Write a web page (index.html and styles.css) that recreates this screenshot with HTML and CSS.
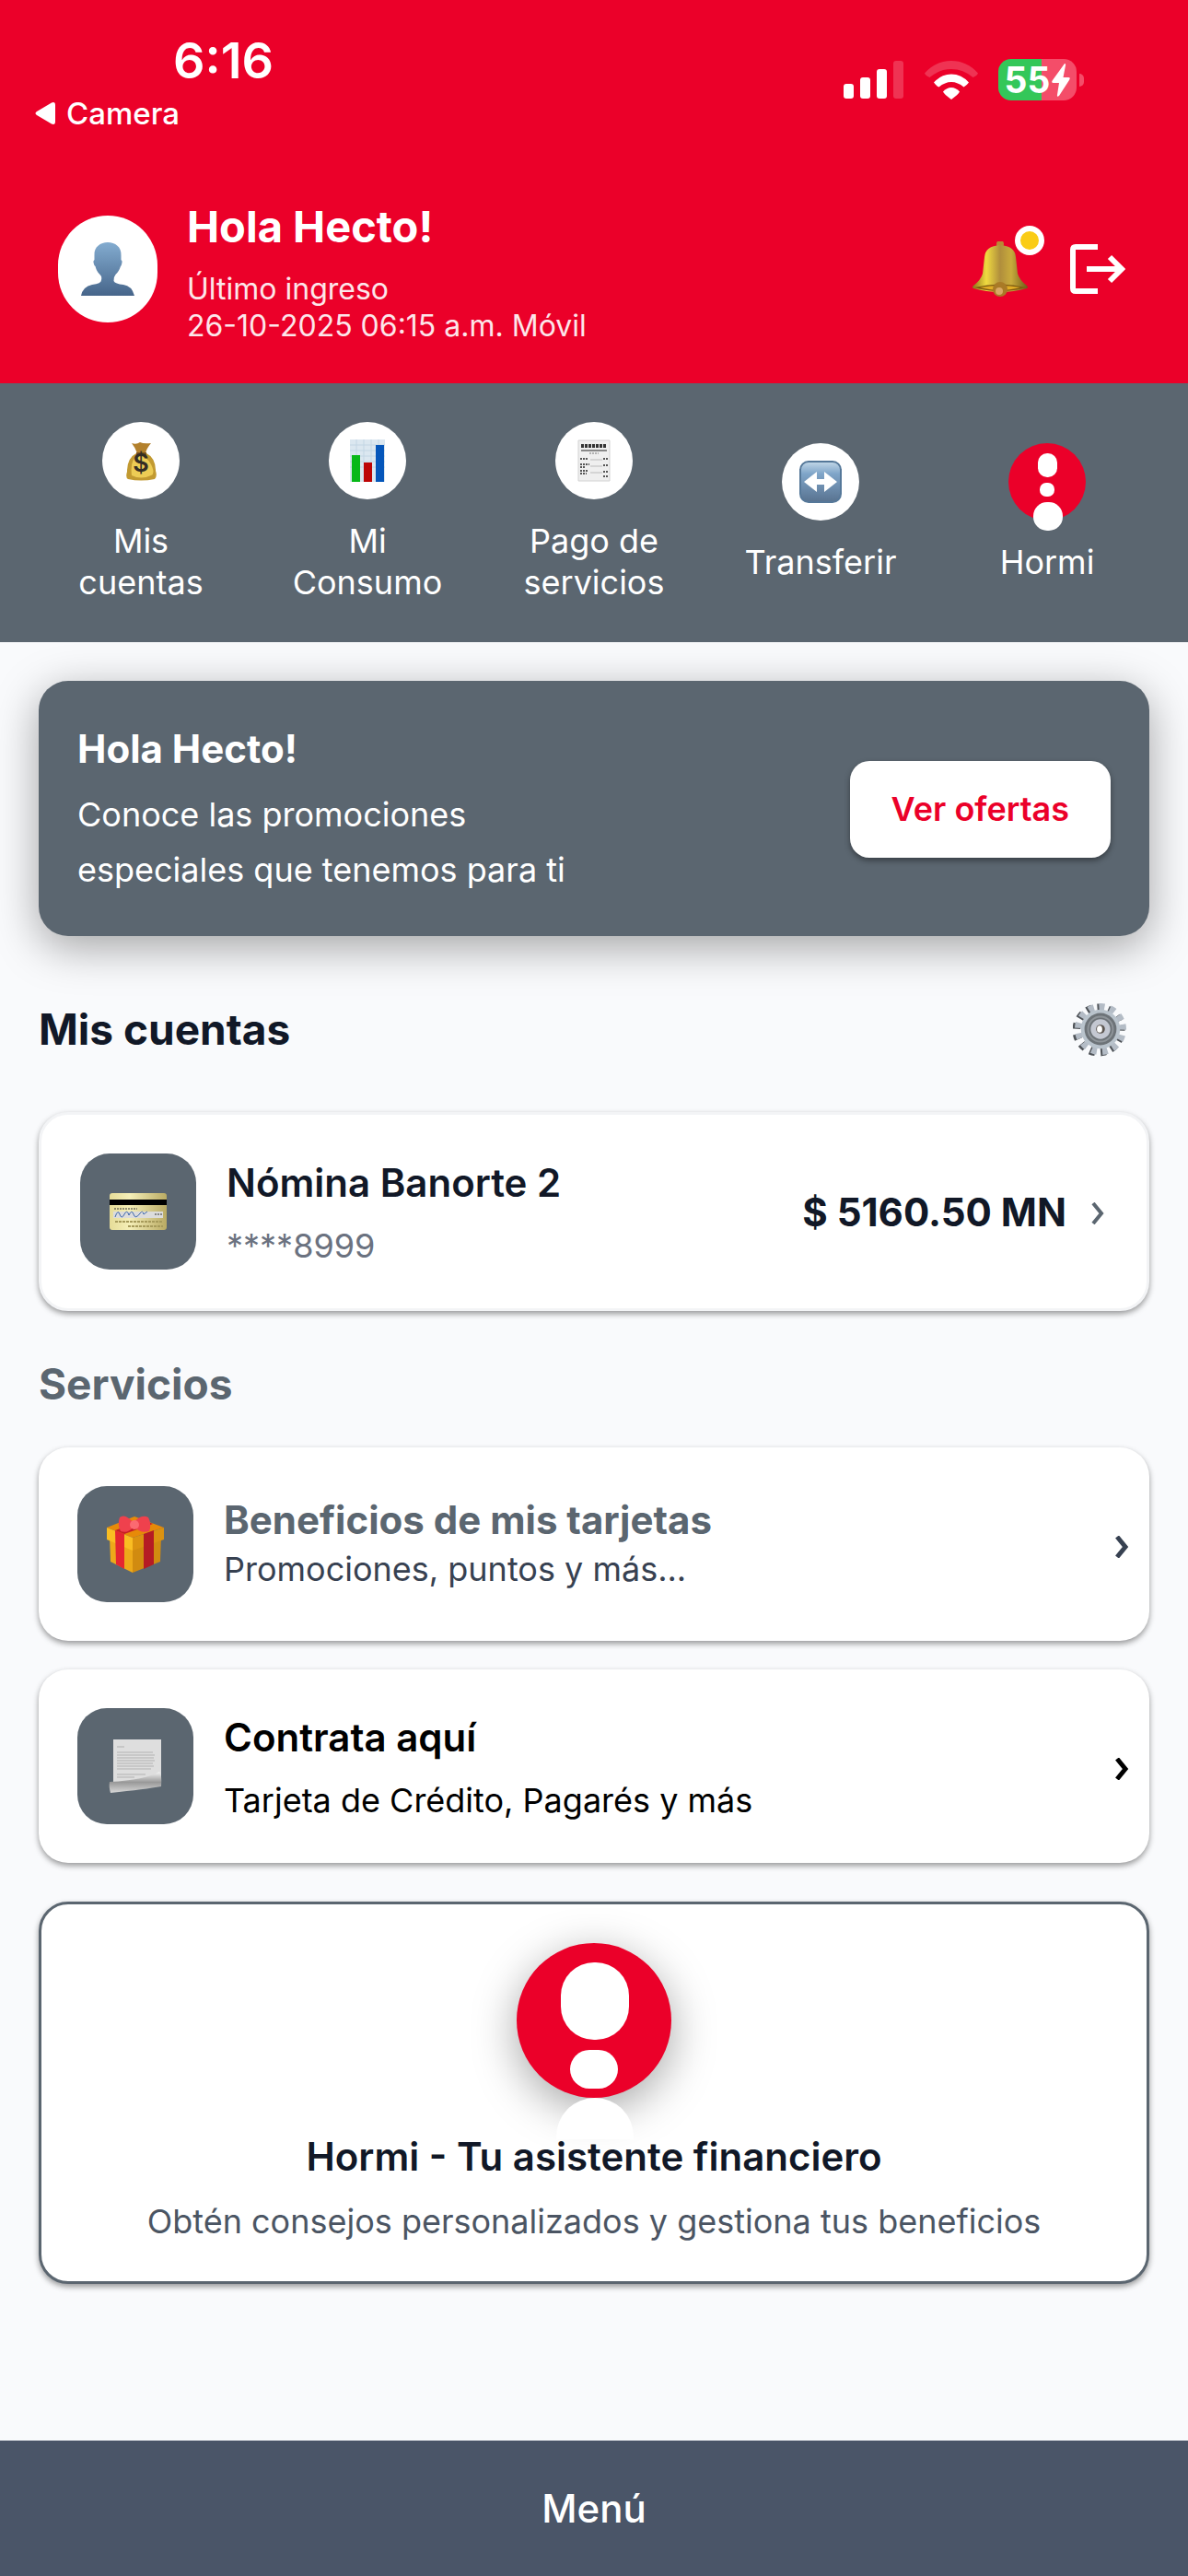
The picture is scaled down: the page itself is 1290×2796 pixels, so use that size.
FILE: index.html
```html
<!DOCTYPE html>
<html lang="es">
<head>
  <meta charset="utf-8">
  <meta name="viewport" content="width=device-width, initial-scale=1">
  <title>Mis cuentas</title>
  <link rel="stylesheet" href="styles.css">
</head>
<body>

<header class="top">
  <div class="status">
    <div class="status-left">
      <div class="clock">6:16</div>
      <a class="back" href="#">
        <svg width="22" height="26" viewBox="0 0 22 26"><path d="M2 11 18 1.5Q22 0 22 4V22Q22 26 18 24.5L2 15Q-1 13 2 11Z" fill="#fff"/></svg>
        Camera
      </a>
    </div>
    <div class="status-icons">
      <svg width="66" height="42" viewBox="0 0 66 42" fill="#fff">
        <rect x="0" y="25" width="11" height="16" rx="3"/>
        <rect x="18" y="18" width="11" height="23" rx="3"/>
        <rect x="36" y="9" width="11" height="32" rx="3"/>
        <rect x="54" y="0" width="11" height="41" rx="3" opacity=".2"/>
      </svg>
      <svg width="58" height="42" viewBox="0 0 58 42" fill="#fff">
        <path d="M0 13.5Q12 0 29 0T58 13.5Q57 16 52.5 18Q42 9 29 9T5.500 18Q1 16 0 13.5Z" opacity=".2"/>
        <path d="M10 23.5Q18 14.5 29 14.5T48 23.5Q46 26.5 42.5 28.5Q36 23 29 23T15.500 28.5Q12 26.5 10 23.5Z"/>
        <path d="M20 33.5Q24 29 29 29T38 33.5Q37 36 29 42Q21 36 20 33.5Z"/>
      </svg>
      <div class="battery">
        <span class="battery-text">55</span>
        <svg width="20" height="36" viewBox="0 0 20 36"><path d="M14 0Q15.500 0 15 2L12.500 15H18Q21 15 19 18L8 35Q5.500 37 6 34L8 21H2Q-1 21 1 18Z" fill="#fff"/></svg>
      </div>
    </div>
  </div>

  <div class="profile">
    <div class="avatar">
      <svg width="58" height="58" viewBox="0 0 58 58">
        <defs><linearGradient id="person" x2="0" y2="1"><stop offset="0" stop-color="#83acd0"/><stop offset="1" stop-color="#46658a"/></linearGradient></defs>
        <path d="M29 0C37 0 44 5 43.5 14V19Q45 20 44.5 22Q44 25 43 26Q41 32 37.5 35Q35 38 35.5 42Q37 45 46 46Q55 47 58 58H0Q2 48 12 46Q22 45 22 41Q23 37 20.5 35Q17 32 15.5 26Q14 25 13.5 22Q13 20 14.5 19V14C14 5 21 0 29 0Z" fill="url(#person)"/>
      </svg>
    </div>
    <div class="greeting">
      <h1>Hola Hecto!</h1>
      <p>Último ingreso<br>26-10-2025 06:15 a.m. Móvil</p>
    </div>
    <button class="icon-button bell" aria-label="Notificaciones">
      <svg width="60" height="60" viewBox="0 0 60 60">
        <defs><linearGradient id="brass"><stop offset="0" stop-color="#8d7418"/><stop offset=".25" stop-color="#f0db40"/><stop offset=".5" stop-color="#b08e3c"/><stop offset=".7" stop-color="#c9ab3c"/><stop offset="1" stop-color="#6d5a18"/></linearGradient></defs>
        <circle cx="30" cy="3" r="4" fill="#b98a35"/>
        <path d="M30 4Q46 5 47 17L49 35Q51 42 59 48Q61 50 59 51Q45 55 30 55T1 51Q-1 50 1 48Q9 42 11 35L13 17Q14 5 30 4Z" fill="url(#brass)"/>
        <path d="M2 50Q30 43 58 50Q45 54 30 54T2 50Z" fill="#7d5a10"/>
        <path d="M8 50Q30 46 52 50Q40 53 30 53T8 50Z" fill="#e0ac25"/>
        <circle cx="30" cy="52" r="8" fill="#a97a26"/>
        <circle cx="29" cy="54" r="4" fill="#d8a866"/>
      </svg>
      <span class="badge"></span>
    </button>
    <button class="icon-button" aria-label="Salir">
      <svg width="60" height="54" viewBox="0 0 60 54" fill="none" stroke="#fff" stroke-width="6">
        <path d="M30 3H6Q3 3 3 6V48Q3 51 6 51H30"/>
        <path d="M18 27H56"/>
        <path d="M43 14 56 27 43 40"/>
      </svg>
    </button>
  </div>
</header>

<nav class="shortcuts">
  <a href="#">
    <span class="circle">
      <svg width="33" height="43" viewBox="0 0 33 43">
        <path d="M6 2Q11 4 15 1Q19 3 27 2Q22 8 21 13H12Q10 7 6 2Z" fill="#b3812d"/>
        <path d="M11 13H22Q32 18 32 32Q34 38 31 41Q16 44 2 41Q-1 39 1 33Q1 18 11 13Z" fill="#c29a31"/>
        <path d="M12 16Q22 15 27 25T27 37Q16 42 6 37Q4 20 12 16Z" fill="#edcc55"/>
        <path d="M11 12H22V15H11Z" fill="#7f551d"/>
      </svg>
      <span class="coin">$</span>
    </span>
    Mis<br>cuentas
  </a>
  <a href="#">
    <span class="circle">
      <svg width="40" height="46" viewBox="0 0 40 46">
        <path d="M1 0H39V46H1Z" fill="#dbe7f0"/>
        <path d="M1 6H39M1 12H39M1 18H39M1 24H39M1 30H39M8 0V46M16 0V46M24 0V46M32 0V46" stroke="#c3d6e4" stroke-width="1"/>
        <path d="M3 17H12V46H3Z" fill="#07b818"/><path d="M16 25H25V46H16Z" fill="#bd0505"/><path d="M29 6H38V46H29Z" fill="#0556ba"/>
      </svg>
    </span>
    Mi<br>Consumo
  </a>
  <a href="#">
    <span class="circle">
      <svg width="36" height="46" viewBox="0 0 36 46">
        <path d="M1 1H35V45H1Z" fill="#efefef" stroke="#d2d2d2"/>
        <path d="M4 7H32" stroke="#333" stroke-width="4" stroke-dasharray="3 1"/>
        <path d="M4 12H32" stroke="#888" stroke-width="2"/>
        <path d="M13 15H23" stroke="#777" stroke-dasharray="2 1"/>
        <path d="M3 21H12M3 27H13M3 30H9M3 34H12M3 37H10M28 21H34M28 28H34M28 35H34M28 40H34" stroke="#555" stroke-width="2" stroke-dasharray="2 1"/>
        <path d="M14 22H27M14 29H27M14 36H27" stroke="#bbb"/>
      </svg>
    </span>
    Pago de<br>servicios
  </a>
  <a href="#">
    <span class="circle">
      <svg width="46" height="46" viewBox="0 0 46 46">
        <defs><linearGradient id="key" x2="0" y2="1"><stop offset="0" stop-color="#c3d8e8"/><stop offset=".3" stop-color="#7fa5c9"/><stop offset="1" stop-color="#58728f"/></linearGradient></defs>
        <rect x="1" y="1" width="44" height="44" rx="9" fill="url(#key)" stroke="#557899" stroke-width="2"/>
        <path d="M5 23 19 12V20H27V12L41 23 27 34V26H19V34Z" fill="#fff"/>
      </svg>
    </span>
    Transferir
  </a>
  <a href="#">
    <span class="circle hormi">
      <svg width="84" height="96" viewBox="0 0 84 96" fill="#fff">
        <rect x="32" y="11" width="21" height="26" rx="10"/>
        <rect x="34" y="43" width="16" height="15" rx="7"/>
        <rect x="27" y="64" width="32" height="31" rx="15"/>
      </svg>
    </span>
    Hormi
  </a>
</nav>

<main>
  <section class="promo">
    <div>
      <h2>Hola Hecto!</h2>
      <p>Conoce las promociones<br>especiales que tenemos para ti</p>
    </div>
    <button>Ver ofertas</button>
  </section>

  <div class="section-head">
    <h2>Mis cuentas</h2>
    <button class="icon-button" aria-label="Configurar cuentas">
      <svg width="58" height="60" viewBox="0 0 60 60">
        <circle cx="29" cy="31" r="25" fill="none" stroke="#4f5358" stroke-width="9" stroke-dasharray="6 6.083" transform="rotate(-12 29 31)"/>
        <circle cx="31" cy="30" r="25" fill="none" stroke="#b4bcc6" stroke-width="8" stroke-dasharray="6 6.083" transform="rotate(-12 31 30)"/>
        <circle cx="31" cy="30" r="22" fill="#b9c3cc"/>
        <circle cx="31" cy="30" r="18" fill="#6d7378"/>
        <circle cx="31" cy="30" r="14" fill="none" stroke="#8e9499" stroke-width="2"/>
        <circle cx="31" cy="30" r="11" fill="#c4c8d2"/>
        <circle cx="31" cy="30" r="5" fill="#5c5550"/>
        <ellipse cx="30" cy="30" rx="3" ry="4" fill="#fff"/>
      </svg>
    </button>
  </div>

  <a class="card account" href="#">
    <span class="tile">
      <svg width="62" height="50" viewBox="0 0 62 50">
        <defs><linearGradient id="gold"><stop offset="0" stop-color="#e6dc98"/><stop offset=".35" stop-color="#f5efb8"/><stop offset="1" stop-color="#b9aa63"/></linearGradient></defs>
        <rect y="5" width="62" height="40" rx="3" fill="url(#gold)"/>
        <path d="M0 12H62V18H0Z"/>
        <path d="M4 25H58V32H4Z" fill="#dcdcdc"/>
        <path d="M6 31Q9 22 11 28T16 28T21 29Q24 22 26 28T33 27Q36 23 37 28L41 25" fill="none" stroke="#3e69ad"/>
        <path d="M5 22H30M49 28H57" stroke="#333" stroke-width="1" stroke-dasharray="2 1"/>
        <path d="M6 36H58M20 41H58" stroke="#a79b5b" stroke-width="2" stroke-dasharray="3 1"/>
      </svg>
    </span>
    <span class="card-text">
      <strong>Nómina Banorte 2</strong>
      <span class="number">****8999</span>
    </span>
    <span class="amount">$ 5160.50 MN</span>
    <svg class="chevron" width="15" height="24" viewBox="0 0 15 24"><path d="M2 1 11 12 2 23"/></svg>
  </a>

  <h2 class="services-title">Servicios</h2>

  <a class="card service benefits" href="#">
    <span class="tile">
      <svg width="62" height="62" viewBox="0 0 62 62">
        <path d="M3 22 28 30V62L4 50Z" fill="#eda91a"/><path d="M59 22 28 30V62L58 50Z" fill="#d18b10"/>
        <path d="M0 13 30 1 62 13 28 24Z" fill="#e78a08"/>
        <path d="M0 13 28 24V38L0 26Z" fill="#fabd22"/><path d="M62 13 28 24V38L62 26Z" fill="#db9210"/>
        <path d="M9 16 19 20V58L10 53Z" fill="#e52630"/><path d="M40 20 51 16V53L40 58Z" fill="#b51b24"/>
        <path d="M9 16 40 5 50 9 19 20Z" fill="#c51d25"/>
        <path d="M29 8Q20-3 14 2Q11 10 15 17Q23 20 29 12Q37 20 46 17Q49 9 45 2Q37-2 29 8Z" fill="#ef414d"/>
        <circle cx="30" cy="10" r="5" fill="#fb6971"/>
      </svg>
    </span>
    <span class="card-text">
      <strong>Beneficios de mis tarjetas</strong>
      <span>Promociones, puntos y más...</span>
    </span>
    <svg class="chevron" width="15" height="24" viewBox="0 0 15 24"><path d="M2 1 11 12 2 23"/></svg>
  </a>

  <a class="card service" href="#">
    <span class="tile">
      <svg width="58" height="60" viewBox="0 0 58 60">
        <defs><linearGradient id="curl" x2="0" y2="1"><stop offset="0" stop-color="#f5f5f5"/><stop offset=".5" stop-color="#999"/><stop offset="1" stop-color="#d8d8d8"/></linearGradient></defs>
        <path d="M5 1H57V50L5 52Z" fill="#dedede"/>
        <path d="M9 9H17M9 15H48M9 18H50M9 21H49M9 24H50M9 27H48M9 30H49M9 33H46M9 39H40M9 42H28" stroke="#b1b1b1" stroke-width="1"/>
        <path d="M1 47Q40 45 55 36Q58 38 57 52Q40 55 2 59Q0 52 1 47Z" fill="url(#curl)"/>
      </svg>
    </span>
    <span class="card-text">
      <strong>Contrata aquí</strong>
      <span>Tarjeta de Crédito, Pagarés y más</span>
    </span>
    <svg class="chevron" width="15" height="24" viewBox="0 0 15 24"><path d="M2 1 11 12 2 23"/></svg>
  </a>

  <a class="card assistant" href="#">
    <span class="assistant-logo">
      <svg width="168" height="213" viewBox="0 0 168 213" fill="#fff">
        <rect x="48" y="21" width="74" height="84" rx="36"/>
        <rect x="58" y="116" width="52" height="42" rx="21"/>
        <path d="M43 213V210A42 42 0 0 1 127 210V213Z"/>
      </svg>
    </span>
    <strong>Hormi - Tu asistente financiero</strong>
    <span>Obtén consejos personalizados y gestiona tus beneficios</span>
  </a>
</main>

<button class="menu">Menú</button>

</body>
</html>
```

FILE: styles.css
```css
* {
  box-sizing: border-box;
}

body {
  margin: 0;
  min-height: 100vh;
  display: flex;
  flex-direction: column;
  background: #f9fafc;
  color: #111827;
  font-family: Inter, sans-serif;
  font-size: 36px;
  line-height: 45px;
}

h1, h2, p {
  margin: 0;
}

a {
  color: inherit;
  text-decoration: none;
}

button {
  border: 0;
  font: inherit;
  cursor: pointer;
}

svg {
  display: block;
}

.icon-button {
  padding: 0;
  background: none;
}

/* header */

.top {
  background: #eb0029;
  color: white;
}

.status {
  display: flex;
  align-items: flex-start;
  justify-content: space-between;
  height: 177px;
  padding: 36px 112px 0 38px;
}

.clock {
  padding-left: 150px;
  font-size: 54px;
  font-weight: 600;
  line-height: 60px;
}

.back {
  display: flex;
  align-items: center;
  gap: 12px;
  font-size: 33px;
  font-weight: 500;
  line-height: 54px;
}

.status-icons {
  display: flex;
  align-items: center;
  gap: 22px;
  padding-top: 28px;
}

.battery {
  position: relative;
  display: flex;
  align-items: center;
  justify-content: center;
  gap: 2px;
  width: 85px;
  height: 45px;
  margin-right: 9px;
  border-radius: 14px;
  background: linear-gradient(90deg, #34c759 55%, #f44d69 55%);
}

.battery::after {
  content: "";
  position: absolute;
  left: 88px;
  width: 5px;
  height: 14px;
  border-radius: 0 5px 5px 0;
  background: #f44d69;
}

.battery-text {
  font-size: 39px;
  font-weight: 700;
}

.profile {
  display: flex;
  align-items: center;
  height: 239px;
  padding: 0 68px 9px 63px;
}

.avatar {
  display: flex;
  align-items: center;
  justify-content: center;
  width: 108px;
  height: 116px;
  border-radius: 54px;
  background: white;
}

.greeting {
  flex: 1;
  padding: 6px 0 0 32px;
}

.greeting h1 {
  margin-bottom: 18px;
  font-size: 47px;
  line-height: 60px;
}

.greeting p {
  font-size: 32px;
  line-height: 40px;
  opacity: .9;
}

.bell {
  position: relative;
  margin-right: 46px;
}

.badge {
  position: absolute;
  top: -17px;
  right: -18px;
  width: 32px;
  height: 32px;
  border: 6px solid white;
  border-radius: 50%;
  background: #facc15;
}

/* shortcuts */

.shortcuts {
  display: grid;
  grid-template-columns: repeat(5, 1fr);
  align-items: center;
  padding: 42px 30px;
  background: #5b6670;
  color: white;
  text-align: center;
}

.circle {
  position: relative;
  display: flex;
  align-items: center;
  justify-content: center;
  width: 84px;
  height: 84px;
  margin: 0 auto 23px;
  border-radius: 50%;
  background: white;
}

.coin {
  position: absolute;
  top: 22px;
  color: #332d25;
  font-size: 27px;
  font-weight: 600;
}

.hormi {
  align-items: flex-start;
  background: #eb0029;
}

/* content */

main {
  flex: 1;
  padding: 42px;
}

.promo {
  display: flex;
  align-items: center;
  justify-content: space-between;
  padding: 44px 42px 42px;
  border-radius: 32px;
  background: #5b6670;
  color: white;
  box-shadow: 0 12px 48px rgba(0, 0, 0, .35);
}

.promo h2 {
  margin-bottom: 11px;
  font-size: 42px;
  line-height: 60px;
}

.promo p {
  line-height: 60px;
}

.promo button {
  padding: 30px 45px;
  border-radius: 21px;
  background: white;
  color: #eb0029;
  font-weight: 600;
  box-shadow: 0 3px 6px rgba(0, 0, 0, .4);
}

.section-head {
  display: flex;
  align-items: center;
  justify-content: space-between;
  margin: 71px 0 60px;
  padding-right: 25px;
}

.section-head h2,
.services-title {
  font-size: 46px;
  line-height: 60px;
}

.services-title {
  margin: 49px 0 39px;
  color: #5b6670;
}

.card {
  display: flex;
  align-items: center;
  border-radius: 32px;
  background: white;
  box-shadow: 0 3px 6px rgba(0, 0, 0, .4);
}

.card strong {
  font-size: 42px;
  font-weight: 600;
}

.tile {
  display: flex;
  align-items: center;
  justify-content: center;
  width: 126px;
  height: 126px;
  border-radius: 32px;
  background: #5b6670;
}

.card-text {
  display: flex;
  flex: 1;
  flex-direction: column;
  gap: 24px;
  padding: 6px 0 0 33px;
}

.chevron {
  fill: none;
  stroke: currentColor;
  stroke-width: 4;
}

.account {
  padding: 42px;
  border: 3px solid #f3f4f6;
}

.account .chevron {
  margin: 4px 3px 0 27px;
  color: #5b6670;
}

.number {
  color: #6b7280;
}

.amount {
  font-size: 42px;
  font-weight: 700;
}

.service {
  margin-bottom: 31px;
  padding: 42px 22px 42px 42px;
  color: black;
}

.service .chevron {
  margin-top: 6px;
  stroke-width: 5;
}

.benefits {
  color: #374151;
}

.benefits .card-text {
  gap: 9px;
  padding-top: 0;
}

.benefits strong {
  color: #5b6670;
  font-weight: 700;
}

.assistant {
  flex-direction: column;
  margin-top: 42px;
  padding: 42px;
  border: 3px solid #5b6670;
  color: #4b5563;
}

.assistant-logo {
  height: 168px;
  margin-bottom: 41px;
  border-radius: 50%;
  background: #eb0029;
  box-shadow: 0 12px 48px rgba(0, 0, 0, .35);
}

.assistant strong {
  position: relative;
  margin-bottom: 26px;
  color: #111827;
}

.menu {
  height: 147px;
  background: #4a5568;
  color: white;
  font-size: 42px;
  font-weight: 500;
}
```
